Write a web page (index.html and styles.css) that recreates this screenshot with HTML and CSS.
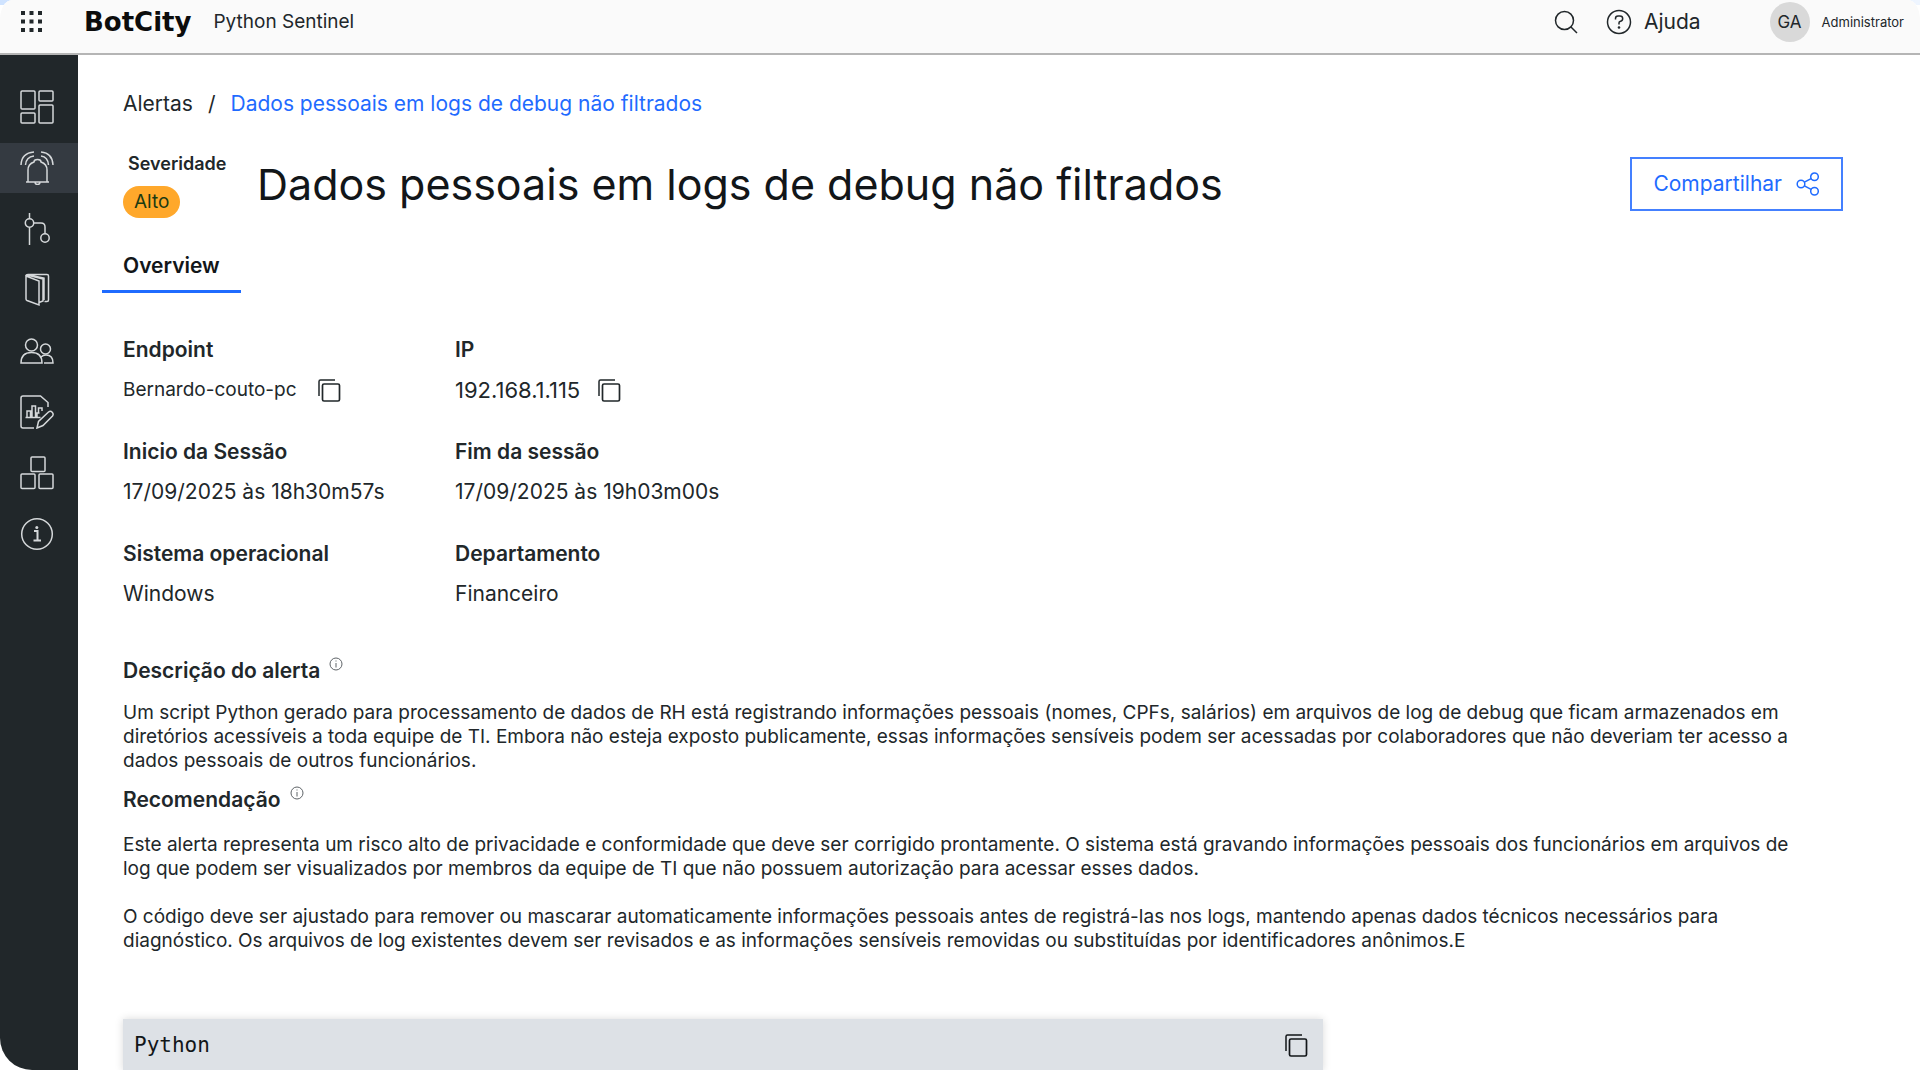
FILE: index.html
```
<!DOCTYPE html>
<html lang="pt-BR">
<head>
    <meta charset="UTF-8">
    <meta name="viewport" content="width=device-width, initial-scale=1.0">
    <title>BotCity - Python Sentinel</title>
    <link rel="stylesheet" href="styles.css">
</head>
<body>
    <!-- shared icons -->
    <svg class="sprite" aria-hidden="true">
        <symbol id="icon-copy" viewBox="0 0 24 24">
            <path d="M2 18V3.500Q2 2 3.500 2H18" stroke-width="1.500"/>
            <rect x="5.500" y="6" width="17" height="17" rx="1.500" stroke-width="1.700"/>
        </symbol>
        <symbol id="icon-info" viewBox="0 0 14 14">
            <circle cx="7" cy="7" r="6"/>
            <path d="M7 6v4.500M7 3.500v1"/>
        </symbol>
    </svg>

    <div class="app">
        <header class="topbar">
            <button type="button" class="icon-btn" aria-label="Aplicativos">
                <svg class="solid" width="22" height="22" viewBox="0 0 22 22">
                    <path d="M0 0h4v4H0zM8.500 0h4v4h-4zM17 0h4v4h-4zM0 8.500h4v4H0zM8.500 8.500h4v4h-4zM17 8.500h4v4h-4zM0 17h4v4H0zM8.500 17h4v4h-4zM17 17h4v4h-4z"/>
                </svg>
            </button>
            <a href="#" class="logo">BotCity</a>
            <span class="product">Python Sentinel</span>

            <div class="topbar-right">
                <button type="button" class="icon-btn" aria-label="Buscar">
                    <svg width="24" height="24" viewBox="0 0 24 24">
                        <circle cx="10.500" cy="10.500" r="9"/>
                        <path d="M17 17l6 6"/>
                    </svg>
                </button>
                <a href="#" class="help">
                    <svg width="26" height="26" viewBox="0 0 26 26">
                        <circle cx="13" cy="13" r="11.500"/>
                        <path d="M9.500 10.500V9.500Q9.500 7 12 7h2q2.700 0 2.700 2.600T14 12.500q-1 .3-1 1.500v1.500"/>
                        <circle class="solid" cx="13" cy="18.500" r="1.300"/>
                    </svg>
                    Ajuda
                </a>
                <div class="user">
                    <span class="avatar">GA</span>
                    <span>Administrator</span>
                </div>
            </div>
        </header>

        <div class="body">
            <nav class="sidebar">
                <a href="#" aria-label="Painel">
                    <svg width="34" height="34" viewBox="0 0 34 34">
                        <rect x="1" y="1" width="14" height="18" rx="1"/>
                        <rect x="19" y="1" width="14" height="10" rx="1"/>
                        <rect x="1" y="23" width="14" height="10" rx="1"/>
                        <rect x="19" y="15" width="14" height="18" rx="1"/>
                    </svg>
                </a>
                <a href="#" class="selected" aria-label="Alertas">
                    <svg width="34" height="34" viewBox="0 0 34 34">
                        <path d="M6 31h23M8 31V19q0-6 6-8 0-2.500 3.500-2.500T21 11q6 2 6 8v12M15 31q0 2.500 2.500 2.500T20 31"/>
                        <path d="M1 14Q1.500 2 14 1M5.500 14Q6 6 14 5M33 14Q32.500 2 21 1M28.500 14Q28 6 21 5"/>
                    </svg>
                </a>
                <a href="#" aria-label="Fluxos">
                    <svg width="34" height="34" viewBox="0 0 34 34">
                        <circle cx="9.500" cy="11" r="4.200"/>
                        <circle cx="25" cy="26" r="4.200"/>
                        <path d="M9.500 1v5.800M9.500 15.200V33M13.700 11H21q4 0 4 4v6.800"/>
                    </svg>
                </a>
                <a href="#" aria-label="Biblioteca">
                    <svg width="34" height="34" viewBox="0 0 34 34">
                        <path d="M6 3l13 5v24L7 27.500q-1-.5-1-1.500zM6 2.500q0-1 2-1h19q1.500 0 1.500 1.500v24q0 1.500-1.500 1.500h-2.500M19 29.500l4-1.500V6L7 2M24 27V5L9 2"/>
                    </svg>
                </a>
                <a href="#" aria-label="Usuários">
                    <svg width="34" height="34" viewBox="0 0 34 34">
                        <circle cx="11.500" cy="11" r="6"/>
                        <circle cx="25.500" cy="15" r="5"/>
                        <path d="M1 29q0-10.500 10.500-10.500T22 29zM21 23q2-2 5-2 7 0 7 8h-9"/>
                    </svg>
                </a>
                <a href="#" aria-label="Relatórios">
                    <svg width="34" height="34" viewBox="0 0 34 34">
                        <path d="M14 33H3q-2 0-2-2V3q0-2 2-2h17.500L28 7.500V12M5.500 22.500h15"/>
                        <path d="M7 22v-6h3.500v6M12 22V11h3.500v11M17 22v-4h2.500M18.500 18v-5H22v3"/>
                        <path d="M17 33l1.500-6.500L28.500 17q2-1.500 3.700.2t.3 3.800L23 30.500z"/>
                    </svg>
                </a>
                <a href="#" aria-label="Pacotes">
                    <svg width="34" height="34" viewBox="0 0 34 34">
                        <rect x="11" y="1" width="14" height="14.500" rx="1"/>
                        <rect x="1" y="18" width="14" height="14.500" rx="1"/>
                        <rect x="19" y="18" width="14" height="14.500" rx="1"/>
                    </svg>
                </a>
                <a href="#" aria-label="Informações">
                    <svg width="34" height="34" viewBox="0 0 34 34">
                        <circle cx="17" cy="17" r="15.300"/>
                        <path d="M14 14h3.500v9.500M13.500 23.500H21" stroke-width="2"/>
                        <circle class="solid" cx="16.800" cy="10.500" r="1.500"/>
                    </svg>
                </a>
            </nav>

            <main class="content">
                <div class="breadcrumb">
                    <a href="#">Alertas</a>
                    <span>/</span>
                    <a href="#" class="current">Dados pessoais em logs de debug não filtrados</a>
                </div>

                <div class="title-row">
                    <div class="severity">
                        <span class="severity-label">Severidade</span>
                        <span class="badge">Alto</span>
                    </div>
                    <h1>Dados pessoais em logs de debug não filtrados</h1>
                    <button type="button" class="share-btn">
                        Compartilhar
                        <svg width="24" height="24" viewBox="0 0 24 24">
                            <circle cx="5" cy="12" r="3.800"/>
                            <circle cx="18.500" cy="4.800" r="3.800"/>
                            <circle cx="18.500" cy="19.200" r="3.800"/>
                            <path d="M8.400 10.200l6.700-3.600M8.400 13.800l6.700 3.600"/>
                        </svg>
                    </button>
                </div>

                <div class="tabs">
                    <a href="#" class="tab">Overview</a>
                </div>

                <dl class="details">
                    <div>
                        <dt>Endpoint</dt>
                        <dd class="endpoint">
                            Bernardo-couto-pc
                            <button type="button" class="icon-btn" aria-label="Copiar endpoint"><svg width="24" height="24"><use href="#icon-copy"/></svg></button>
                        </dd>
                    </div>
                    <div>
                        <dt>IP</dt>
                        <dd class="ip">
                            192.168.1.115
                            <button type="button" class="icon-btn" aria-label="Copiar IP"><svg width="24" height="24"><use href="#icon-copy"/></svg></button>
                        </dd>
                    </div>
                    <div>
                        <dt>Inicio da Sessão</dt>
                        <dd>17/09/2025 às 18h30m57s</dd>
                    </div>
                    <div>
                        <dt>Fim da sessão</dt>
                        <dd>17/09/2025 às 19h03m00s</dd>
                    </div>
                    <div>
                        <dt>Sistema operacional</dt>
                        <dd>Windows</dd>
                    </div>
                    <div>
                        <dt>Departamento</dt>
                        <dd>Financeiro</dd>
                    </div>
                </dl>

                <section class="description">
                    <h2>Descrição do alerta <svg width="14" height="14"><use href="#icon-info"/></svg></h2>
                    <p>Um script Python gerado para processamento de dados de RH está registrando informações pessoais (nomes, CPFs, salários) em arquivos de log de debug que ficam armazenados em diretórios acessíveis a toda equipe de TI. Embora não esteja exposto publicamente, essas informações sensíveis podem ser acessadas por colaboradores que não deveriam ter acesso a dados pessoais de outros funcionários.</p>
                </section>

                <section class="recommendation">
                    <h2>Recomendação <svg width="14" height="14"><use href="#icon-info"/></svg></h2>
                    <p>Este alerta representa um risco alto de privacidade e conformidade que deve ser corrigido prontamente. O sistema está gravando informações pessoais dos funcionários em arquivos de log que podem ser visualizados por membros da equipe de TI que não possuem autorização para acessar esses dados.</p>
                    <p>O código deve ser ajustado para remover ou mascarar automaticamente informações pessoais antes de registrá-las nos logs, mantendo apenas dados técnicos necessários para diagnóstico. Os arquivos de log existentes devem ser revisados e as informações sensíveis removidas ou substituídas por identificadores anônimos.E</p>
                </section>

                <div class="code-header">
                    <span>Python</span>
                    <button type="button" class="icon-btn" aria-label="Copiar código"><svg width="24" height="24"><use href="#icon-copy"/></svg></button>
                </div>
            </main>
        </div>
    </div>
</body>
</html>
```
FILE: styles.css
```
* {
    box-sizing: border-box;
}

body {
    margin: 0;
    background-color: #ffffff;
    color: #21272a;
    font-family: Inter, "Liberation Sans", sans-serif;
    font-size: 21px;
    line-height: 28px;
    /* blue strip behind the rounded corners */
    background-image: linear-gradient(to right, #cfe3ff, #eef5ff);
    background-size: 100% 5px;
    background-repeat: no-repeat;
}

a {
    color: inherit;
    text-decoration: none;
}

svg {
    display: block;
    flex-shrink: 0;
    fill: none;
    stroke: currentColor;
    stroke-width: 1.5;
}

.solid {
    fill: currentColor;
    stroke: none;
}

.sprite {
    position: absolute;
    width: 0;
    height: 0;
}

.icon-btn {
    padding: 0;
    border: none;
    background: none;
    color: inherit;
    cursor: pointer;
}

.app {
    display: flex;
    flex-direction: column;
    height: calc(100vh - 10px);
    overflow: hidden;
    border-radius: 12px 12px 0 32px / 20px 20px 0 32px;
    background-color: #ffffff;
}

/* top bar */
.topbar {
    display: flex;
    align-items: center;
    flex-shrink: 0;
    height: 55px;
    padding: 0 16px 9px 21px;
    background-color: #fafafa;
    border-bottom: 2px solid #b5b5b5;
}

.logo {
    margin-left: 41px;
    color: #0c0c0c;
    font-family: "DejaVu Sans", sans-serif;
    font-size: 26px;
    font-weight: bold;
}

.product {
    margin-left: 22px;
    font-size: 19px;
}

.topbar-right {
    display: flex;
    align-items: center;
    margin-left: auto;
}

.help {
    display: flex;
    align-items: center;
    gap: 12px;
    margin: 0 69px 0 28px;
}

.user {
    display: flex;
    align-items: center;
    gap: 12px;
    font-size: 13px;
}

.avatar {
    width: 40px;
    height: 40px;
    border-radius: 50%;
    background-color: #d9d9d9;
    font-size: 17px;
    line-height: 40px;
    text-align: center;
}

/* layout */
.body {
    display: flex;
    flex: 1;
    min-height: 0;
}

.sidebar {
    display: flex;
    flex-direction: column;
    flex-shrink: 0;
    gap: 11px;
    width: 78px;
    padding-top: 27px;
    background-color: #21272a;
    color: #d5d8da;
}

.sidebar a {
    display: flex;
    align-items: center;
    height: 50px;
    padding-left: 20px;
}

.sidebar a.selected {
    background-color: #343a41;
}

.content {
    flex: 1;
    padding: 35px 77px 0 45px;
    overflow: hidden;
}

.breadcrumb {
    display: flex;
    gap: 15px;
}

.breadcrumb .current {
    color: #1f6bff;
}

.title-row {
    display: flex;
    align-items: center;
    margin-top: 32px;
}

.severity {
    display: flex;
    flex-direction: column;
    align-items: flex-start;
    gap: 8px;
    width: 134px;
}

.severity-label {
    padding-left: 5px;
    font-size: 18px;
    font-weight: 600;
}

.badge {
    padding: 2px 11px;
    border-radius: 16px;
    background-color: #ffa82b;
    color: #1c3a12;
    font-size: 19px;
}

h1 {
    margin: 0;
    color: #121619;
    font-size: 43px;
    font-weight: 400;
    line-height: 52px;
}

.share-btn {
    display: flex;
    align-items: center;
    gap: 14px;
    height: 54px;
    margin-left: auto;
    padding: 0 21px;
    border: 2px solid #4480ff;
    background-color: #ffffff;
    color: #1f6bff;
    font: inherit;
    cursor: pointer;
}

.tabs {
    display: flex;
    margin: 24px 0 0 -21px;
}

.tab {
    padding: 10px 21px;
    border-bottom: 3px solid #1f6bff;
    color: #121619;
    font-weight: 600;
}

/* alert data */
.details {
    display: grid;
    grid-template-columns: 332px 1fr;
    row-gap: 34px;
    margin: 43px 0 0;
}

dt {
    font-weight: 600;
}

dd {
    display: flex;
    align-items: center;
    height: 28px;
    margin: 12px 0 0;
}

.endpoint {
    gap: 20px;
    font-size: 19px;
}

.ip {
    gap: 17px;
    font-size: 22px;
}

h2 {
    display: flex;
    gap: 9px;
    margin: 0;
    font-size: 21px;
    font-weight: 600;
    line-height: 28px;
}

h2 svg {
    color: #5f6468;
    stroke-width: 1;
}

p {
    max-width: 1680px;
    margin: 0;
    font-size: 19px;
    line-height: 24px;
}

.description {
    margin-top: 49px;
}

.description p {
    margin-top: 16px;
}

.recommendation {
    margin-top: 13px;
}

.recommendation h2 {
    margin-bottom: 19px;
}

.recommendation p + p {
    margin-top: 24px;
}

.code-header {
    display: flex;
    align-items: center;
    justify-content: space-between;
    max-width: 1200px;
    height: 52px;
    margin-top: 66px;
    padding: 0 15px 0 11px;
    background-color: #dde1e6;
    box-shadow: 0 0 8px rgba(0, 0, 0, 0.15);
    color: #121619;
    font-family: "DejaVu Sans Mono", monospace;
}
```
